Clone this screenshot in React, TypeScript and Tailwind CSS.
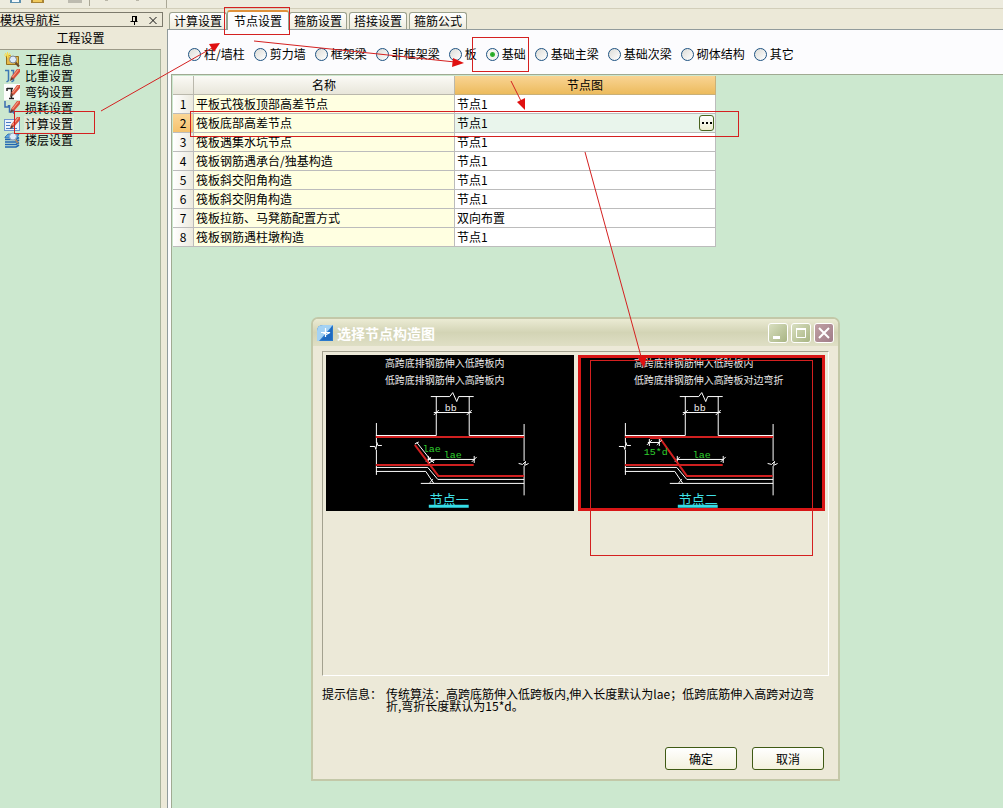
import { useState } from "react";
import type { ReactNode } from "react";

const navItems = ["工程信息", "比重设置", "弯钩设置", "损耗设置", "计算设置", "楼层设置"];

const tabs = ["计算设置", "节点设置", "箍筋设置", "搭接设置", "箍筋公式"];

const categories = ["柱/墙柱", "剪力墙", "框架梁", "非框架梁", "板", "基础", "基础主梁", "基础次梁", "砌体结构", "其它"];

const rows = [
  { name: "平板式筏板顶部高差节点", value: "节点1" },
  { name: "筏板底部高差节点", value: "节点1" },
  { name: "筏板遇集水坑节点", value: "节点1" },
  { name: "筏板钢筋遇承台/独基构造", value: "节点1" },
  { name: "筏板斜交阳角构造", value: "节点1" },
  { name: "筏板斜交阴角构造", value: "节点1" },
  { name: "筏板拉筋、马凳筋配置方式", value: "双向布置" },
  { name: "筏板钢筋遇柱墩构造", value: "节点1" },
];

function Pencil() {
  return (
    <>
      <path d="M7 9 L13 1 L16 1 L16 4 L10 11 Z" fill="#d9503a" />
      <path d="M8.5 9 L14.500 1.500" stroke="#f4a08a" strokeWidth="1.2" />
      <path d="M7 9 L10 11 L6 13 Z" fill="#6b3a2c" />
    </>
  );
}

function NavIcon({ index }: { index: number }) {
  const drawings: ReactNode[] = [
    <>
      <path d="M2.500 3.500h4l1 1h7v8h-12z" fill="#e5b94a" stroke="#96701c" />
      <path d="M0 3h7M3.500 0v6M1 1l5 4M6 1L1 5" stroke="#f6dc50" />
      <circle cx="9" cy="7.500" r="3.500" fill="#dcebfa" stroke="#7c8896" />
      <path d="M11.500 10.500l3.500 4" stroke="#6a4a2c" strokeWidth="2" />
    </>,
    <>
      <path d="M1 2.500h3.500v10l-2 1.500M7 2.500h2.500v10l-2 1.500" stroke="#3c78b4" strokeWidth="1.5" />
      <Pencil />
    </>,
    <>
      <rect width="16" height="16" fill="#fdfdfd" />
      <path d="M3 4.500h6M3 4v3M7.500 5v9M5 14.500h5" stroke="#222" strokeWidth="1.5" />
      <Pencil />
    </>,
    <>
      <path d="M1 1v6h3.500V5M5.500 5v7h4v-3M10 9v5" stroke="#3a6db0" strokeWidth="1.5" />
      <Pencil />
    </>,
    <>
      <rect x="0.5" y="3.500" width="15" height="11" fill="#eaf2fc" stroke="#6f96d0" />
      <path d="M2 6.500h5M2 9.500h4M2 12.500h11" stroke="#4a7cc4" />
      <Pencil />
    </>,
    <>
      <path d="M1 5l3-3h11l-2 4H1z" fill="#5ca4de" stroke="#1f5fa4" strokeWidth="0.7" />
      <path d="M1 7.500h11l3-2M1 10h11l3-2M1 12.500h11l3-2M1 15h11l3-2" stroke="#1f66b2" strokeWidth="1.6" />
      <path d="M11 7l3 4" stroke="#b08a60" strokeWidth="1.5" />
      <circle cx="9" cy="4.500" r="3.500" fill="#dcebf8" stroke="#8fa6c0" />
    </>,
  ];
  return (
    <svg viewBox="0 0 16 16" className="size-4 shrink-0" fill="none" aria-hidden="true">
      {drawings[index]}
    </svg>
  );
}

function Toolbar() {
  return (
    <div className="h-[9px] shrink-0 overflow-hidden border-b border-[#d2ceba] bg-[#edebde]">
      <svg width="520" height="8" aria-hidden="true">
        <path d="M10 0h11v3H10z" fill="#5d8fae" />
        <path d="M12 0h7v2h-7z" fill="#f4f8fa" />
        <path d="M31 0h13v3H31z" fill="#a98436" />
        <path d="M33 0h9v2h-9z" fill="#f0c95c" />
        <path d="M68 0h14v3H68z" fill="#bdbbb0" />
        <path d="M105 0h3v1h-3zM136 0h3v1h-3z" fill="#b9b6a8" />
        <path d="M89.5 0v6M166.5 0v8" stroke="#aaa796" />
      </svg>
    </div>
  );
}

function Sidebar() {
  return (
    <aside className="flex w-[163px] shrink-0 flex-col pt-[3px]">
      <div className="flex h-[15px] items-center justify-between border border-l-0 border-[#7c7a6c] pr-1">
        <h2>模块导航栏</h2>
        <div className="flex gap-2">
          <button type="button" aria-label="固定">
            <svg width="12" height="12" viewBox="0 0 12 12" fill="none" stroke="#000" aria-hidden="true">
              <path d="M4.500 2.500h4M4.500 2v5M2.500 7.500h7M6.500 8v3" />
              <path d="M8 2v5" strokeWidth="2" />
            </svg>
          </button>
          <button type="button" aria-label="关闭">
            <svg width="10" height="12" viewBox="0 0 10 12" stroke="#111" aria-hidden="true">
              <path d="M1.500 3l7 7M8.500 3l-7 7" />
            </svg>
          </button>
        </div>
      </div>
      <h3 className="mr-[2px] flex h-[23px] items-center justify-center border-b border-[#9c9a88] bg-[#ece9d8]">
        工程设置
      </h3>
      <ul className="mr-[2px] flex-1 border-r border-[#a9b39c] bg-[#cce8cf] pt-[2px] pl-1">
        {navItems.map((item, i) => (
          <li key={item}>
            <a href="#" className="flex h-4 items-center gap-1">
              <NavIcon index={i} />
              <span className={i === 4 ? "bg-[#dfe9d6] px-px" : "px-px"}>{item}</span>
            </a>
          </li>
        ))}
      </ul>
    </aside>
  );
}

function TabBar() {
  const [active, setActive] = useState(1);
  return (
    <div className="flex h-5 items-end gap-[2px] pl-[2px]" role="tablist">
      {tabs.map((tab, i) => (
        <button
          key={tab}
          type="button"
          role="tab"
          aria-selected={i === active}
          onClick={() => setActive(i)}
          className={
            i === active
              ? "relative -mx-[2px] -mb-px h-5 w-[62px] rounded-t-[3px] border border-t-2 border-b-0 border-[#91a790] border-t-[#e0913c] bg-[#fcfcfe]"
              : "h-[17px] w-[58px] rounded-t-[3px] border border-b-0 border-[#9ba18d] bg-linear-to-b from-white to-[#eeecdd]"
          }
        >
          {tab}
        </button>
      ))}
    </div>
  );
}

function CategoryRadios() {
  const [selected, setSelected] = useState("基础");
  return (
    <div className="flex h-11 items-center gap-[9px] pt-1 pl-5">
      {categories.map((c) => (
        <label key={c} className="flex items-center gap-[3px] whitespace-nowrap">
          <input
            type="radio"
            name="category"
            checked={selected === c}
            onChange={() => setSelected(c)}
            className="size-[13px] appearance-none rounded-full border border-[#1d5281] bg-linear-to-br from-[#dcdcd7] to-white checked:bg-[radial-gradient(circle,#1fa01f_0,#35b435_2px,#f4f4f0_3px)]"
          />
          {c}
        </label>
      ))}
    </div>
  );
}

function NodeTable() {
  return (
    <table className="w-[543px] table-fixed border-separate border-spacing-0">
      <colgroup>
        <col className="w-[21px]" />
        <col className="w-[261px]" />
        <col className="w-[261px]" />
      </colgroup>
      <thead>
        <tr className="h-[19px]">
          <th className="border-r border-b border-[#bab8ac] bg-linear-to-b from-[#fbfaf6] to-[#e8e6da] p-0" />
          <th className="border-r border-b border-[#bab8ac] bg-linear-to-b from-[#fbfaf6] to-[#e8e6da] p-0 font-normal">
            名称
          </th>
          <th className="border-r border-b border-[#c9b078] bg-linear-to-b from-[#f9d493] to-[#ecbb5c] p-0 font-normal">
            节点图
          </th>
        </tr>
      </thead>
      <tbody>
        {rows.map((row, i) => (
          <tr key={row.name} className="h-[19px]">
            <td
              className={
                i === 1
                  ? "border-r border-b border-[#bcbcbc] bg-linear-to-b from-[#fbd797] to-[#f5c26c] p-0 text-center"
                  : "border-r border-b border-[#bcbcbc] bg-linear-to-r from-white to-[#eceadf] p-0 text-center"
              }
            >
              {i + 1}
            </td>
            <td className="border-r border-b border-[#bcbcbc] bg-[#ffffe1] p-0 pl-[2px]">{row.name}</td>
            <td
              className={
                i === 1
                  ? "border-r border-b border-[#bcbcbc] bg-[#e9f5ec] p-0 pl-[2px]"
                  : "border-r border-b border-[#bcbcbc] bg-white p-0 pl-[2px]"
              }
            >
              <div className="flex items-center justify-between pr-px">
                {row.value}
                {i === 1 && (
                  <button
                    type="button"
                    aria-label="选择节点"
                    className="flex h-4 w-[15px] items-center justify-center gap-[2px] rounded-[3px] border border-[#4a6320] bg-linear-to-b from-white to-[#eeecd0]"
                  >
                    <i className="size-[2px] bg-black" />
                    <i className="size-[2px] bg-black" />
                    <i className="size-[2px] bg-black" />
                  </button>
                )}
              </div>
            </td>
          </tr>
        ))}
      </tbody>
    </table>
  );
}

// Section through a raft with a step in its underside
function NodeDrawing({ second }: { second?: boolean }) {
  return (
    <svg viewBox={second ? "3 0 248 156" : "0 0 248 156"} className="block h-[156px] w-full bg-black" fill="none">
      <g stroke="#fff">
        <path d="M105 41.500h19l3-4 4 9 2-5h15" />
        <path d="M110.500 41v39.500M143.500 41v39.500M108 57.500h38M108 60l5-5M141 60l5-5" />
        <path d="M50 80.500h60.500M143.500 80.500h55" />
        <path d="M50.500 68v20M50.500 95v25M44 91.500h5l1 3 1-7 1 3h4" />
        <path d="M198.500 69v37M198.500 111v29.500M193 108.500l4 1 3-3-1 4 4-2" />
        <path d="M50 112.500h52l10 12h86.500M50 116.500h50l8 12M95 128.500h103.500M104 128l3-4" />
        <path d="M102 104.500h47M102.500 101v7M148.500 101v7M100 107l5-5M146 107l5-5" />
      </g>
      <g stroke="#d02020" strokeWidth="2">
        <path d="M50 82h148.500M50 110h98" />
        <path d={second ? "M75 83h10l27 38h86" : "M89 90l23.500 31h86"} />
      </g>
      {second ? (
        <path d="M73 87.500h12M74.500 84v7M84.500 84v7M72 90l5-5M82 90l5-5" stroke="#fff" />
      ) : (
        <path d="M91 87.500l15 19M89 89l4-2M103 108l6-3M104 103l4 5" stroke="#fff" />
      )}
      <g fill="#e8e8e8" fontSize="10">
        <text x="59" y="12">高跨底排钢筋伸入低跨板内</text>
        <text x="59" y="29">{second ? "低跨底排钢筋伸入高跨板对边弯折" : "低跨底排钢筋伸入高跨板内"}</text>
      </g>
      <g fontSize="10" fontFamily="Liberation Mono, monospace">
        <text x="119" y="56" fill="#e8e8e8">bb</text>
        <text x={second ? 69 : 97} y={second ? 100 : 97} fill="#2fd02f">{second ? "15*d" : "lae"}</text>
        <text x="118" y="103" fill="#2fd02f">lae</text>
      </g>
      <text x="104" y="149" fill="#3fe0e8" fontSize="13">{second ? "节点二" : "节点一"}</text>
      <path d="M103 150h40v3h-40z" fill="#35dde6" />
    </svg>
  );
}

function NodeDialog() {
  const [choice, setChoice] = useState(1);
  return (
    <section
      role="dialog"
      aria-label="选择节点构造图"
      className="absolute top-[317px] left-[311px] flex w-[529px] flex-col rounded-t-[7px] border-2 border-[#c3c8a8] bg-[#ece9d8]"
    >
      <header className="flex h-[27px] items-center gap-1 rounded-t-[5px] bg-linear-to-b from-[#ebebd4] via-[#d3d4b5] to-[#dfdfc5] pr-1 pl-1">
        <svg width="16" height="16" viewBox="0 0 16 16" fill="none" aria-hidden="true">
          <path d="M6 0h10v16H0V6Q0 0 6 0z" fill="#2a78cc" />
          <path d="M6 0h10L2 16H0V6Q0 0 6 0z" fill="#a4d2f4" />
          <path d="M15 1v14H4l3-3 4-2z" fill="#1f6ac0" />
          <path d="M8.500 3v9M4 7.500h9l-4 2-3-2" stroke="#fff" strokeWidth="1.2" />
        </svg>
        <h2 className="flex-1 text-[14px] font-bold text-white">选择节点构造图</h2>
        <div className="flex gap-[3px]">
          <button type="button" aria-label="最小化" className="size-5 rounded-[3px] border border-white bg-linear-to-br from-[#d9dfc0] to-[#a8b483]">
            <svg viewBox="0 0 18 18" aria-hidden="true">
              <path d="M4 12h7v3H4z" fill="#fff" />
            </svg>
          </button>
          <button type="button" aria-label="最大化" className="size-5 rounded-[3px] border border-white bg-linear-to-br from-[#d9dfc0] to-[#a8b483]">
            <svg viewBox="0 0 18 18" fill="none" stroke="#fff" aria-hidden="true">
              <path d="M4.500 4.500h9v9h-9z" />
              <path d="M4 5h10" strokeWidth="2" />
            </svg>
          </button>
          <button type="button" aria-label="关闭" className="size-5 rounded-[3px] border border-white bg-linear-to-br from-[#c0a0a4] to-[#a07c88]">
            <svg viewBox="0 0 18 18" stroke="#fff" strokeWidth="2" aria-hidden="true">
              <path d="M4 4l10 10M14 4L4 14" />
            </svg>
          </button>
        </div>
      </header>

      <div className="px-[9px] pt-[5px] pb-[9px]">
        <div className="grid h-[325px] grid-cols-2 content-start gap-1 border border-t-[#a3a18f] border-r-white border-b-white border-l-[#a3a18f] p-[3px]">
          {[0, 1].map((n) => (
            <button key={n} type="button" onClick={() => setChoice(n)} className="relative block">
              <NodeDrawing second={n === 1} />
              {choice === n && <span className="absolute inset-0 border-[3px] border-[#d81616]" />}
            </button>
          ))}
        </div>

        <div className="mt-3 flex gap-1 leading-3">
          <span className="w-15 shrink-0 whitespace-nowrap">提示信息：</span>
          <p className="w-[436px]">
            传统算法：高跨底筋伸入低跨板内,伸入长度默认为lae；低跨底筋伸入高跨对边弯折,弯折长度默认为15*d。
          </p>
        </div>

        <div className="mt-[35px] flex justify-end gap-[15px] pr-[5px]">
          {["确定", "取消"].map((label) => (
            <button
              key={label}
              type="button"
              className="h-[23px] w-[72px] rounded-[3px] border border-[#3f5a14] bg-linear-to-b from-white to-[#f3f1dd]"
            >
              {label}
            </button>
          ))}
        </div>
      </div>
    </section>
  );
}

// Red marks over the windows, in order of the steps to follow
function Annotations() {
  return (
    <svg width="1003" height="808" className="pointer-events-none absolute top-0 left-0" fill="none" aria-hidden="true">
      <g stroke="#d42020">
        <rect x="224.500" y="7.500" width="65" height="27" />
        <rect x="14.500" y="111.500" width="80" height="22" />
        <rect x="190.500" y="111.500" width="548" height="25" />
        <rect x="472.500" y="37.500" width="56" height="34" />
        <rect x="590.500" y="360.500" width="222" height="195" />
        <path d="M101 111L212 48M254 41L455 62M511 81l10 20M585 152l57 208" />
      </g>
      <g fill="#e01010">
        <path d="M220 43l-11 1 5 8z" />
        <path d="M464 63l-11-5-1 9z" />
        <path d="M525 110l-8-8 8-4z" />
        <path d="M644 368l-6-10 9-3z" />
      </g>
    </svg>
  );
}

export default function App() {
  return (
    <div className="relative flex min-h-screen flex-col overflow-hidden bg-[#ece9d8] font-['Noto_Sans_CJK_SC',sans-serif] text-[12px] leading-4 text-black">
      <Toolbar />
      <div className="flex flex-1">
        <Sidebar />
        <main className="ml-1 flex min-w-0 flex-1 flex-col">
          <TabBar />
          <div className="flex flex-1 flex-col border-t border-l border-[#919b9c] bg-[#fcfcfe]">
            <CategoryRadios />
            <div className="ml-[3px] flex-1 border-t border-l border-[#a0aa92] bg-[#cce8cf] pt-px pl-px">
              <NodeTable />
            </div>
          </div>
        </main>
      </div>
      <NodeDialog />
      <Annotations />
    </div>
  );
}
